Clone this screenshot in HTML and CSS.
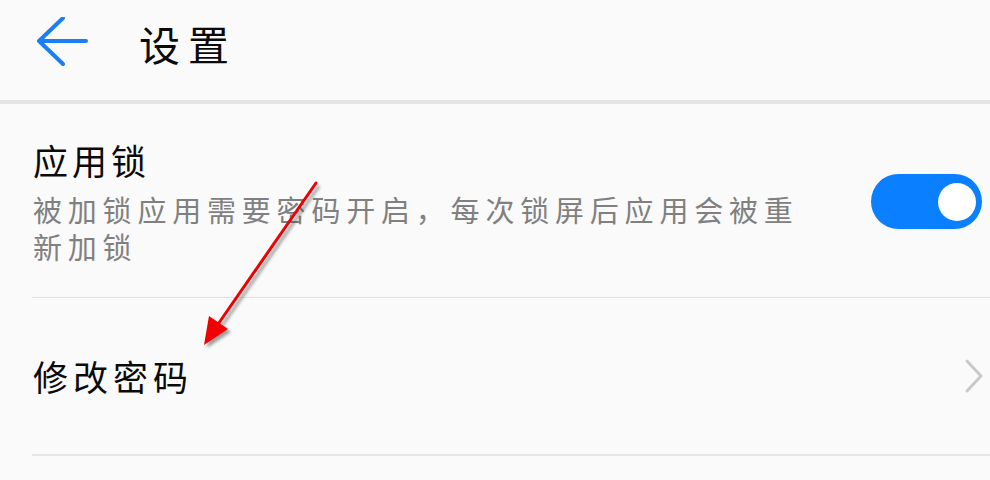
FILE: index.html
```html
<!DOCTYPE html>
<html lang="zh-CN">
<head>
<meta charset="utf-8">
<link rel="stylesheet" href="styles.css">
</head>
<body>
<div class="page">
  <header class="topbar">
    <svg class="back" width="56" height="56" viewBox="0 0 56 56">
      <path d="M5 24 L52 24 M29 1 L5 24 L29 47" fill="none" stroke="#1a7ef7" stroke-width="4" stroke-linecap="round" stroke-linejoin="round"/>
    </svg>
    <h1 class="title">设置</h1>
  </header>
  <div class="list">
    <div class="row row-lock">
      <div class="text">
        <div class="label">应用锁</div>
        <div class="desc">被加锁应用需要密码开启，每次锁屏后应用会被重新加锁</div>
      </div>
      <div class="toggle"><span class="knob"></span></div>
    </div>
    <div class="row row-pwd">
      <div class="label label-wide">修改密码</div>
      <svg class="chev" width="20" height="36" viewBox="0 0 20 36">
        <path d="M3 3 L17 18 L3 33" fill="none" stroke="#c9c9c9" stroke-width="3" stroke-linecap="round" stroke-linejoin="round"/>
      </svg>
    </div>
  </div>
  <svg class="annot" width="990" height="480" viewBox="0 0 990 480">
    <defs>
      <filter id="sh" x="-20%" y="-20%" width="140%" height="140%">
        <feGaussianBlur stdDeviation="1.5"/>
      </filter>
    </defs>
    <g transform="translate(3,3)" opacity="0.45" filter="url(#sh)">
      <line x1="316" y1="183" x2="214" y2="330" stroke="#333" stroke-width="3"/>
      <polygon points="204,345 209,316 228,329" fill="#333"/>
    </g>
    <line x1="316" y1="183" x2="214" y2="330" stroke="#f00000" stroke-width="3" stroke-linecap="round"/>
    <polygon points="204,345 209,316 228,329" fill="#f00000"/>
  </svg>
</div>
</body>
</html>
```
FILE: styles.css
```css
html, body {
  margin: 0;
  padding: 0;
  background: #fafafa;
}
body {
  font-family: "Noto Sans CJK SC", "Noto Sans", sans-serif;
  color: #000;
  width: 990px;
  height: 480px;
  overflow: hidden;
}
.page {
  position: relative;
  width: 990px;
  height: 480px;
}
.topbar {
  height: 100px;
  display: flex;
  align-items: center;
  border-bottom: 4px solid #e4e4e4;
  box-sizing: content-box;
  padding-bottom: 0;
}
.back {
  margin-left: 34px;
  margin-top: -10px;
}
.title {
  margin: -14px 0 0 49px;
  font-weight: 400;
  font-size: 41px;
  letter-spacing: 8px;
  line-height: 48px;
  color: #0a0a0a;
}
.list {
  margin-left: 32px;
}
.row {
  display: flex;
  align-items: center;
  justify-content: space-between;
  box-sizing: border-box;
  padding-right: 8px;
}
.row-lock {
  height: 194px;
  border-bottom: 1px solid #e2e2e2;
  padding-top: 2px;
}
.row-pwd {
  height: 158px;
  border-bottom: 2px solid #e6e6e6;
  padding-right: 6px;
}
.text {
  width: 800px;
}
.label {
  font-size: 35px;
  line-height: 44px;
  letter-spacing: 4px;
  color: #0a0a0a;
  padding-left: 1px;
}
.label-wide {
  letter-spacing: 5px;
}
.desc {
  margin-top: 9px;
  font-size: 29px;
  line-height: 37px;
  letter-spacing: 5.8px;
  color: #808080;
  max-width: 790px;
  padding-left: 1px;
}
.toggle {
  width: 111px;
  height: 55px;
  border-radius: 28px;
  background: #0a7fff;
  display: flex;
  align-items: center;
  justify-content: flex-end;
  padding-right: 6px;
  box-sizing: border-box;
}
.knob {
  width: 38px;
  height: 38px;
  border-radius: 50%;
  background: #fff;
}
.annot {
  position: absolute;
  left: 0;
  top: 0;
  pointer-events: none;
}
```
